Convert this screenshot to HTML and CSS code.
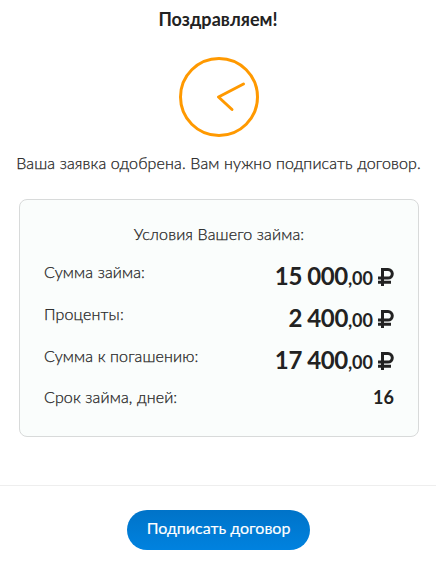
FILE: index.html
```html
<!DOCTYPE html>
<html lang="ru">
<head>
<meta charset="utf-8">
<title>Поздравляем!</title>
<link rel="stylesheet" href="styles.css">
</head>
<body>
<main class="page">
  <h1 class="title">Поздравляем!</h1>
  <svg class="clock" viewBox="0 0 80 80" fill="none" stroke="#f90" stroke-width="3"><circle cx="40" cy="40" r="38.5"/><path d="M64.500 27 39.500 40l13.500 12.500" stroke-linecap="round" stroke-linejoin="round"/></svg>
  <p class="message">Ваша заявка одобрена. Вам нужно подписать договор.</p>
  <section class="card">
    <h2 class="card-title">Условия Вашего займа:</h2>
    <div class="row"><span class="label">Сумма займа:</span><span class="sum"><b class="whole">15 000</b><b class="cents">,00</b><svg class="rub" viewBox="0 0 16 18" fill="none" stroke="#222" stroke-width="3"><path d="M4.500 18V1.500H10a4.300 4.300 0 0 1 0 8.600H0M0 14.200h13"/></svg></span></div>
    <div class="row"><span class="label">Проценты:</span><span class="sum"><b class="whole">2 400</b><b class="cents">,00</b><svg class="rub" viewBox="0 0 16 18" fill="none" stroke="#222" stroke-width="3"><path d="M4.500 18V1.500H10a4.300 4.300 0 0 1 0 8.600H0M0 14.200h13"/></svg></span></div>
    <div class="row"><span class="label">Сумма к погашению:</span><span class="sum"><b class="whole">17 400</b><b class="cents">,00</b><svg class="rub" viewBox="0 0 16 18" fill="none" stroke="#222" stroke-width="3"><path d="M4.500 18V1.500H10a4.300 4.300 0 0 1 0 8.600H0M0 14.200h13"/></svg></span></div>
    <div class="row"><span class="label">Срок займа, дней:</span><b class="days">16</b></div>
  </section>
  <footer class="footer"><button class="sign">Подписать договор</button></footer>
</main>
</body>
</html>
```
FILE: styles.css
```css
* { box-sizing: border-box; }
body { margin: 0; background: #fff; color: #222; font-family: Lato, sans-serif; font-size: 16px; }
.page { height: 563px; display: flex; flex-direction: column; align-items: center; overflow: hidden; }
.title { margin: 8px 0 27px; font-size: 18px; line-height: 22px; font-weight: 700; letter-spacing: 0.05px; }
.clock { width: 80px; height: 80px; flex: none; margin-left: 2px; }
.message, .card-title, .label { font-weight: 300; letter-spacing: 0.14px; -webkit-text-stroke: 0.25px #222; }
.message { margin: 14px 0 25px 1px; line-height: 23px; white-space: nowrap; }
.card { width: 400px; height: 238px; margin: 0 0 0 2px; padding: 23px 24px; border: 1px solid #d8dada; border-radius: 8px; background: #fafdfc; }
.card-title { margin: 0 0 11px; font-size: 16px; line-height: 22px; text-align: center; }
.row { display: flex; justify-content: space-between; height: 42px; }
.label { line-height: 32px; white-space: nowrap; }
.sum { display: flex; align-items: baseline; height: 42px; line-height: 40px; white-space: nowrap; }
.whole { font-size: 24px; letter-spacing: -0.4px; }
.cents { font-size: 18px; }
.rub { width: 16px; height: 18px; margin-left: 5px; position: relative; top: 1px; }
.days { font-size: 18px; line-height: 32px; }
.row:last-child { margin-top: -1px; }
.footer { width: 100%; margin-top: 48px; padding-top: 24px; border-top: 1px solid #eee; text-align: center; }
.sign { width: 183px; height: 40px; padding: 0 0 5px 1px; border: 0; border-radius: 20px; background: linear-gradient(#0073c8, #0082df); color: #fff; font: 400 16px Lato, sans-serif; -webkit-text-stroke: 0.15px #fff; }
```
